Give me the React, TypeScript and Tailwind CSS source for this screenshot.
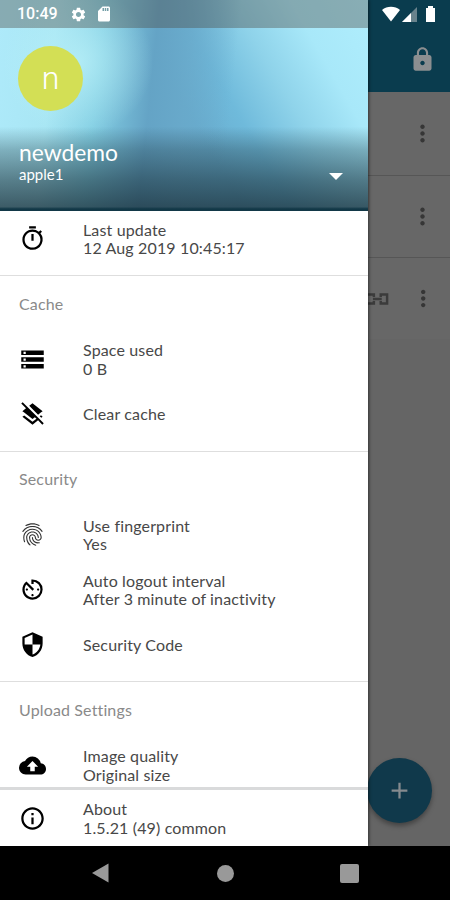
import type { ReactNode } from 'react';
import {
  MdOutlineTimer, MdStorage, MdLayersClear, MdFingerprint, MdAvTimer, MdSecurity,
  MdBackup, MdInfoOutline, MdLock, MdMoreVert, MdAdd, MdSettings, MdSdCard,
} from 'react-icons/md';

function Row({ icon, title, sub, className = '' }: { icon: ReactNode; title: string; sub?: string; className?: string }) {
  return (
    <div className={`flex h-[55px] items-center pl-[19px] ${className}`}>
      <div className="flex w-16 shrink-0 text-[27px] text-black">{icon}</div>
      <div className="pt-px text-base leading-[18.500px] tracking-[0.14px] whitespace-nowrap text-[#484848]">
        <div>{title}</div>
        {sub && <div>{sub}</div>}
      </div>
    </div>
  );
}

function Section({ title, children }: { title: string; children: ReactNode }) {
  return (
    <section className="border-t border-[#dedede]">
      <h2 className="flex h-[55.500px] items-center pl-[19px] text-base tracking-[0.14px] text-[#8a8a8a]">{title}</h2>
      {children}
    </section>
  );
}

function StatusIcons() {
  return (
    <svg className="block h-7 w-[82px]" viewBox="0 0 82 28">
      <path d="M14 10c5-4.200 13-4.200 18 0l-9 11.500z" fill="#fff" />
      <path d="M49 7v15H34z" fill="#68828c" />
      <path d="M43 13v9h-9z" fill="#fff" />
      <path d="M58 8h2V6h5v2h2v14h-9z" fill="#fff" />
    </svg>
  );
}

function Profile() {
  return (
    <header className="h-[211px] shrink-0 bg-[linear-gradient(180deg,transparent_60%,rgba(30,56,66,0.32)_71%,rgba(28,52,62,0.58)_85%,rgba(26,48,58,0.76)_98%,#123847_99%),radial-gradient(ellipse_75px_75px_at_78px_62px,rgba(184,240,248,0.8),transparent),linear-gradient(96deg,#aeeafa_0%,#a8e6f4_15%,rgba(134,210,229,0.9)_27%,rgba(100,163,197,0.95)_41%,rgba(104,167,200,0.7)_50%,transparent_62%),linear-gradient(60deg,#69aed0_50%,#6fbadb_60%,#8fd3ea_72%,#a8e8f9_84%,#b0eefd_100%)] text-white">
      <div className="flex h-7 items-center bg-[rgba(78,78,72,0.4)] pl-[17px] font-[Roboto,sans-serif] text-base font-medium">
        <span className="w-[53px]">10:49</span>
        <MdSettings className="size-[17px]" />
        <MdSdCard className="ml-2 size-[18px]" />
      </div>
      <div className="mt-[18px] ml-[18px] flex size-[65px] items-center justify-center rounded-full bg-[#d3df55] pb-[2px] font-[Roboto,sans-serif] text-[32px] font-light">n</div>
      <div className="mt-7 flex">
        <div className="w-[310px] pl-[19px]">
          <div className="text-[22.800px] leading-[26px]">newdemo</div>
          <div className="mt-px text-[15px] leading-[17px]">apple1</div>
        </div>
        <svg className="mt-[34px] ml-[19px] h-[7px] w-[14px]" viewBox="0 0 14 7"><path d="M0 0h14L7 7z" fill="white" /></svg>
      </div>
    </header>
  );
}

function ListRow({ link = false, className }: { link?: boolean; className: string }) {
  return (
    <div className={`flex items-center justify-end pr-[14px] text-[#363636] ${className}`}>
      {link && (
        <svg className="mr-[21px] h-3 w-[21px]" viewBox="0 0 21 12" fill="none" stroke="#3b3b3b" strokeWidth="2.500">
          <path d="M0 1.500h6v2.500M0 10.500h6v-2.500M13 4v-2.500h6.500v9H13v-2.500M5 6h9" />
        </svg>
      )}
      <MdMoreVert className="size-[27px]" />
    </div>
  );
}

export default function App() {
  return (
    <div className="flex h-[900px] w-[450px] flex-col overflow-hidden bg-black font-[Lato,sans-serif]">
      <main className="relative flex h-[846px] overflow-hidden bg-[#656565]">
        <aside className="z-10 flex w-[368px] shrink-0 flex-col bg-white shadow-[1px_0_3px_rgba(0,0,0,0.5)]">
          <Profile />
          <div className="h-[576px] overflow-hidden">
            <Row className="mb-[9px]" icon={<MdOutlineTimer />} title="Last update" sub="12 Aug 2019 10:45:17" />
            <Section title="Cache">
              <Row icon={<MdStorage />} title="Space used" sub="0 B" />
              <Row className="mb-[9px]" icon={<MdLayersClear />} title="Clear cache" />
            </Section>
            <Section title="Security">
              <Row icon={<MdFingerprint className="opacity-80" />} title="Use fingerprint" sub="Yes" />
              <Row icon={<MdAvTimer />} title="Auto logout interval" sub="After 3 minute of inactivity" />
              <Row className="mb-[9px]" icon={<MdSecurity />} title="Security Code" />
            </Section>
            <Section title="Upload Settings">
              <Row icon={<MdBackup />} title="Image quality" sub="Original size" />
            </Section>
          </div>
          <Row className="h-[59px] border-t-3 border-[#d9dadb]" icon={<MdInfoOutline />} title="About" sub="1.5.21 (49) common" />
        </aside>
        <div className="w-[82px]">
          <div className="h-[92px] bg-[#0a3c4e]">
            <StatusIcons />
            <MdLock className="mt-[18px] ml-[41px] size-[27px] text-[#8b8e90]" />
          </div>
          <div className="bg-[#676767]">
            <ListRow className="h-[84px] border-b border-[#565656]" />
            <ListRow className="h-[82px] border-b border-[#565656]" />
            <ListRow className="h-[81px]" link />
          </div>
        </div>
        <button className="absolute top-[758px] left-[367px] flex size-[65px] items-center justify-center rounded-full bg-[#10394b] text-[27px] text-[#858b8f] shadow-[0_3px_5px_rgba(0,0,0,0.35)]">
          <MdAdd />
        </button>
      </main>
      <nav className="flex h-[54px] items-center text-[#999]">
        <svg className="ml-[91px] h-5 w-[18px]" viewBox="0 0 18 20"><path d="M1 10 17.500 .5v19z" fill="currentColor" /></svg>
        <span className="ml-[108px] size-[17px] rounded-full bg-[#999]" />
        <span className="ml-[106px] size-[19px] rounded-[2px] bg-[#999]" />
      </nav>
    </div>
  );
}
